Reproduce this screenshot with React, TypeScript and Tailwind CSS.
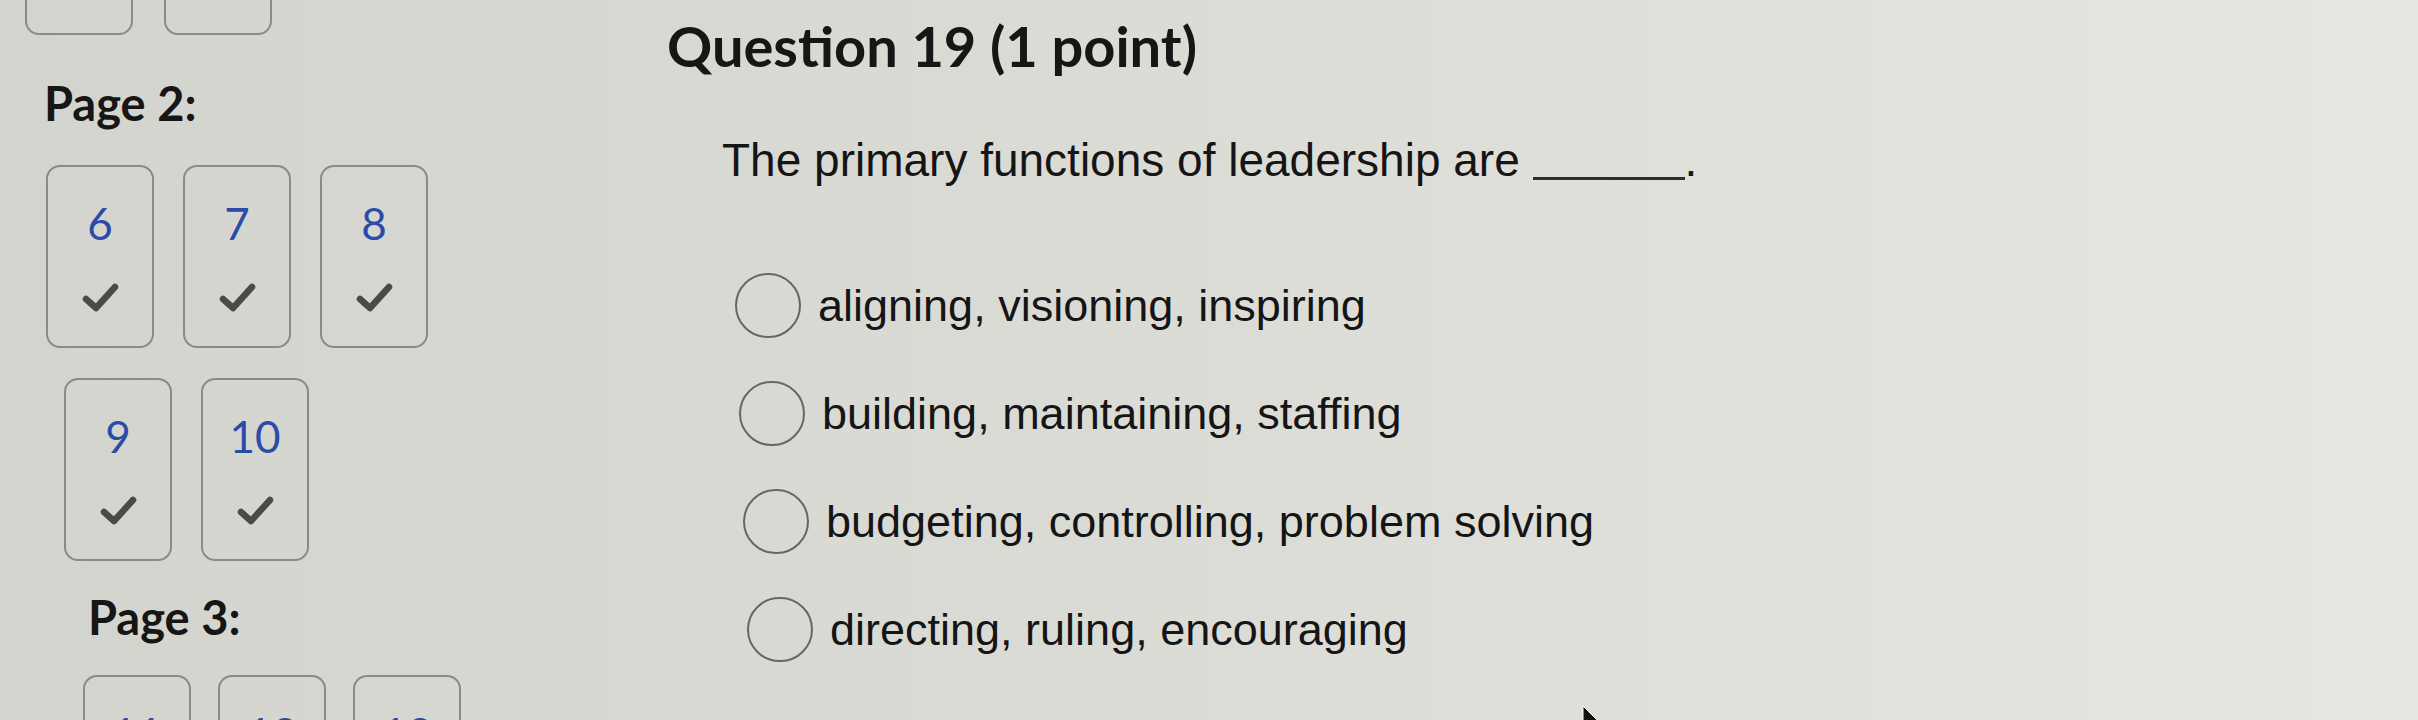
import React from "react";

const Check = () => (
  <svg width="37" height="30" viewBox="0 0 37 30" className="mt-[37px] shrink-0">
    <path d="M4 17 L14 26 L33 5" fill="none" stroke="#4a4a4a" strokeWidth="6.5" strokeLinecap="round" strokeLinejoin="round" />
  </svg>
);

const Box = ({ n }: { n: number }) => (
  <div className="w-[108px] h-[183px] shrink-0 rounded-[14px] border-2 border-[#8a8a87] flex flex-col items-center pt-[34px]">
    <span className="text-[44px] leading-none font-['Lato',sans-serif] text-[#2a4ca8]">{n}</span>
    <Check />
  </div>
);

const Radio = ({ label, indent }: { label: string; indent: string }) => (
  <div className={`flex items-center h-[65px] ${indent}`}>
    <span className="w-[66px] h-[65px] shrink-0 rounded-full border-[2.5px] border-[#666666]" />
    <span className="ml-[17px] text-[45px] leading-none text-[#151515] font-['Liberation_Sans',Arial,sans-serif] whitespace-nowrap">
      {label}
    </span>
  </div>
);

export default function App() {
  return (
    <div className="relative w-[2418px] h-[720px] overflow-hidden bg-linear-to-r from-[#d4d4cf] via-[#dcdcd7] to-[#e7e7e2] flex">
      {/* Left column: question navigator */}
      <div className="w-[667px] shrink-0 flex flex-col">
        <div className="flex gap-[31px] ml-[25px] -mt-[148px]">
          <Box n={4} />
          <Box n={5} />
        </div>
        <div className="ml-[44px] mt-[45px] text-[47px] leading-none font-bold text-[#161616] font-['Lato',sans-serif]">
          Page 2:
        </div>
        <div className="flex gap-[29px] ml-[46px] mt-[38px]">
          <Box n={6} />
          <Box n={7} />
          <Box n={8} />
        </div>
        <div className="flex gap-[29px] ml-[64px] mt-[30px]">
          <Box n={9} />
          <Box n={10} />
        </div>
        <div className="ml-[88px] mt-[33px] text-[47px] leading-none font-bold text-[#161616] font-['Lato',sans-serif]">
          Page 3:
        </div>
        <div className="flex gap-[27px] ml-[83px] mt-[34px]">
          <Box n={11} />
          <Box n={12} />
          <Box n={13} />
        </div>
      </div>

      {/* Right column: question */}
      <div className="flex flex-col pt-[18px]">
        <h2 className="text-[56px] leading-none font-bold text-[#161616] font-['Lato',sans-serif] whitespace-nowrap">
          Question 19 (1 point)
        </h2>
        <p className="ml-[55px] mt-[63px] text-[46px] leading-none text-[#151515] font-['Liberation_Sans',Arial,sans-serif] whitespace-nowrap">
          The primary functions of leadership are{" "}
          <span className="inline-block w-[152px] h-[10px] -mb-[4px] border-b-[3px] border-[#2e2e2e]" />.
        </p>
        <div className="mt-[90px] flex flex-col gap-[43px]">
          <Radio label="aligning, visioning, inspiring" indent="ml-[68px]" />
          <Radio label="building, maintaining, staffing" indent="ml-[72px]" />
          <Radio label="budgeting, controlling, problem solving" indent="ml-[76px]" />
          <Radio label="directing, ruling, encouraging" indent="ml-[80px]" />
        </div>
      </div>

      {/* mouse cursor tip */}
      <svg className="absolute left-[1582px] top-[705px]" width="20" height="24" viewBox="0 0 20 24">
        <path d="M1 1 L1 22 L6 17 L10 24 L13 23 L9 16 L16 16 Z" fill="#111" stroke="#fff" strokeWidth="1" />
      </svg>
    </div>
  );
}
